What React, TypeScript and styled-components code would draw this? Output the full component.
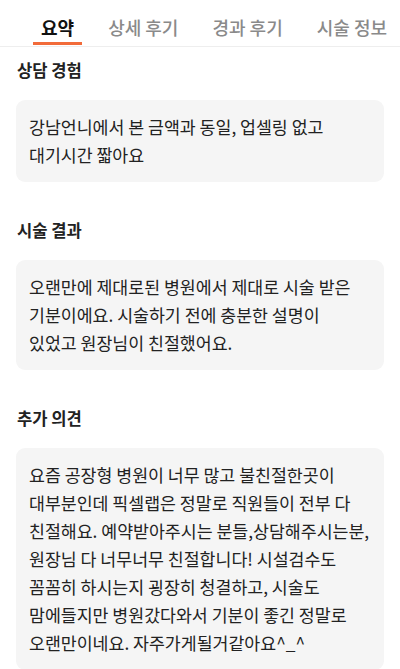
import React from "react";
import styled, { createGlobalStyle } from "styled-components";

const GlobalStyle = createGlobalStyle`
  * { box-sizing: border-box; }
  body {
    margin: 0;
    background: #ffffff;
    font-family: "Noto Sans CJK KR", "Noto Sans", sans-serif;
    color: #222222;
  }
`;

const Page = styled.div`
  width: 400px;
  min-height: 669px;
  background: #ffffff;
  overflow: hidden;
`;

const TabBar = styled.div`
  display: flex;
  gap: 18px;
  padding: 0 0 0 33px;
  height: 47px;
  border-bottom: 1px solid #eeeeee;
  white-space: nowrap;
  overflow: hidden;
`;

const Tab = styled.div<{ $active?: boolean }>`
  position: relative;
  flex: none;
  height: 46px;
  padding: 14px 8px 0;
  font-size: 18px;
  line-height: 26px;
  font-weight: ${(p) => (p.$active ? 700 : 500)};
  color: ${(p) => (p.$active ? "#111111" : "#8a8a8a")};

  &::after {
    content: "";
    display: ${(p) => (p.$active ? "block" : "none")};
    position: absolute;
    left: 0;
    right: 0;
    bottom: 1px;
    height: 3px;
    background: #f26b3a;
  }
`;

const Content = styled.div`
  padding: 11px 16px 0 16px;
`;

const Section = styled.section`
  & + & {
    margin-top: 36px;
  }
`;

const Heading = styled.h3`
  margin: 0 0 18px 1px;
  font-size: 16.6px;
  line-height: 24px;
  font-weight: 700;
  color: #222222;
`;

const Card = styled.div`
  background: #f5f5f5;
  border-radius: 9px;
  padding: 13px 13px;
  font-size: 17.3px;
  line-height: 28px;
  color: #222222;
  word-break: keep-all;
`;

const sections = [
  {
    title: "상담 경험",
    lines: ["강남언니에서 본 금액과 동일, 업셀링 없고", "대기시간 짧아요"],
  },
  {
    title: "시술 결과",
    lines: [
      "오랜만에 제대로된 병원에서 제대로 시술 받은",
      "기분이에요. 시술하기 전에 충분한 설명이",
      "있었고 원장님이 친절했어요.",
    ],
  },
  {
    title: "추가 의견",
    lines: [
      "요즘 공장형 병원이 너무 많고 불친절한곳이",
      "대부분인데 픽셀랩은 정말로 직원들이 전부 다",
      "친절해요. 예약받아주시는 분들,상담해주시는분,",
      "원장님 다 너무너무 친절합니다! 시설검수도",
      "꼼꼼히 하시는지 굉장히 청결하고, 시술도",
      "맘에들지만 병원갔다와서 기분이 좋긴 정말로",
      "오랜만이네요. 자주가게될거같아요^_^",
    ],
  },
];

const tabs = ["요약", "상세 후기", "경과 후기", "시술 정보"];

const App = () => {
  const [active, setActive] = React.useState(0);
  return (
    <Page>
      <GlobalStyle />
      <TabBar>
        {tabs.map((t, i) => (
          <Tab key={t} $active={i === active} onClick={() => setActive(i)}>
            {t}
          </Tab>
        ))}
      </TabBar>
      <Content>
        {sections.map((s) => (
          <Section key={s.title}>
            <Heading>{s.title}</Heading>
            <Card>
              {s.lines.map((l, i) => (
                <React.Fragment key={i}>
                  {i > 0 && <br />}
                  {l}
                </React.Fragment>
              ))}
            </Card>
          </Section>
        ))}
      </Content>
    </Page>
  );
};

export default App;
